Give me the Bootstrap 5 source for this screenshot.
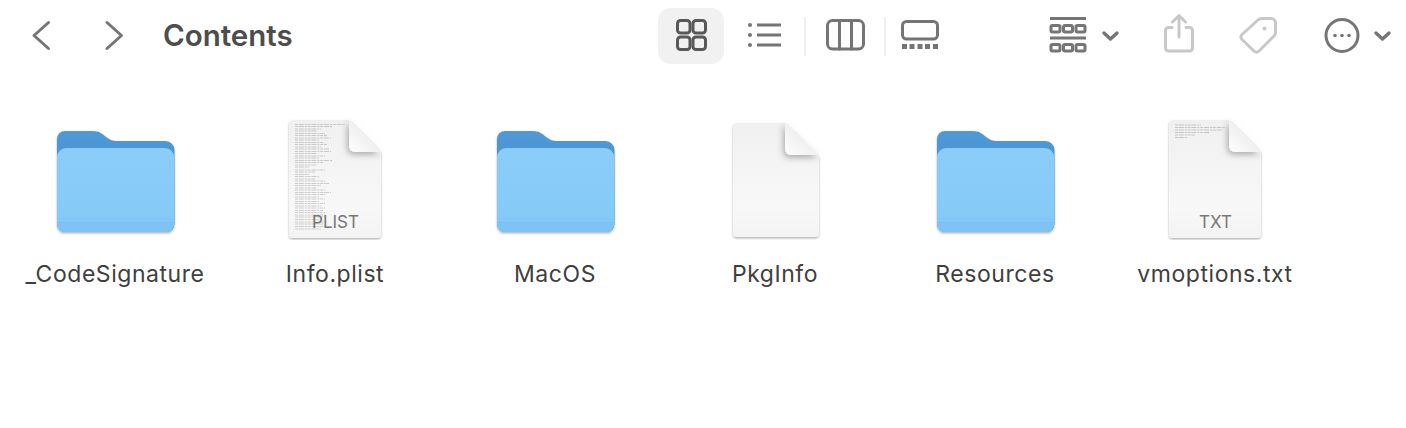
<!doctype html>
<html lang="en">
<head>
<meta charset="utf-8">
<title>Contents</title>
<link href="https://cdn.jsdelivr.net/npm/bootstrap@5.3.0/dist/css/bootstrap.min.css" rel="stylesheet">
<style>
body{background:#fff;font-family:Inter,"Liberation Sans",sans-serif;overflow:hidden}
.tb{height:72px}
.tb-left{width:658px;padding-left:25px}
.tb svg{display:block;flex:none}
.tb-title{margin:0 0 0 33px;font-family:Inter,sans-serif;font-size:29.5px;font-weight:600;color:#4d4d4d;line-height:1;letter-spacing:0}
.tb-gap{width:35px}
.tb-pill{background:#f1f1f1;border-radius:13px;width:66px;height:56px}
.tb-sep{width:2px;height:39px;background:#efefef}
.tb-right{margin-left:90px}
.ms-share{margin-left:30px}
.ms-more{margin-left:35px}
.st{fill:none;stroke:#757575;stroke-width:3;stroke-linecap:round;stroke-linejoin:round}
.st-dark{stroke:#585858}
.st-dim{stroke:#c8c8c8}
.st-heavy{stroke-width:3.4}
.st-butt{stroke-linecap:butt}
.fill-g{fill:#757575}
.browser{padding-top:38px;padding-left:5px}
.entry{width:220px}
.entry-icon{height:130px}
.entry-icon svg{display:block}
.entry-name{margin-top:20px;font-size:23px;line-height:28px;color:#3f3f3f;text-align:center;letter-spacing:.55px}
.kind{top:100px;left:1px;right:0;text-align:center;font-size:17px;line-height:24px;color:#777}
</style>
</head>
<body>
<svg class="d-block" width="0" height="0" aria-hidden="true">
<defs>
<linearGradient id="gBack" x1="0" y1="0" x2="0" y2="1"><stop offset="0" stop-color="#5099d6"/><stop offset="1" stop-color="#3f88c9"/></linearGradient>
<linearGradient id="gFront" x1="0" y1="0" x2="0" y2="1"><stop offset="0" stop-color="#8bcdf9"/><stop offset="1" stop-color="#84c9f7"/></linearGradient>
<linearGradient id="gPage" x1="0" y1="0" x2="0" y2="1"><stop offset="0" stop-color="#f0f0f0"/><stop offset=".75" stop-color="#f8f8f8"/><stop offset="1" stop-color="#f3f3f3"/></linearGradient>
<linearGradient id="gFold" x1="0" y1="1" x2="1" y2="0"><stop offset="0" stop-color="#fefefe"/><stop offset="1" stop-color="#e2e2e2"/></linearGradient>
<filter id="fShadow" x="-10%" y="-10%" width="120%" height="120%"><feDropShadow dx="0" dy="1.400" stdDeviation=".9" flood-color="#000" flood-opacity=".3"/></filter>
<filter id="fFold" x="-50%" y="-50%" width="200%" height="200%"><feDropShadow dx="-1.500" dy="2.500" stdDeviation="3" flood-color="#000" flood-opacity=".3"/></filter>
<symbol id="folder" viewBox="0 0 220 130">
  <g filter="url(#fShadow)">
    <path d="M52 29a8 8 0 0 1 8-8h27c5 0 8 1 11 3.500l4.500 3.500c3 2 5 3 9 3h49a9 9 0 0 1 9 9v74a8 8 0 0 1-8 8H60a8 8 0 0 1-8-8z" fill="url(#gBack)"/>
    <path d="M52 47a9 9 0 0 1 9-9h99a9 9 0 0 1 9 9v67a8 8 0 0 1-8 8H60a8 8 0 0 1-8-8z" fill="url(#gFront)"/>
    <path d="M52 112h117v2a8 8 0 0 1-8 8H60a8 8 0 0 1-8-8z" fill="#7fc3f4"/>
    <path d="M52 109h117M52 112h117" stroke="#80c3f3" stroke-width="1" fill="none"/>
  </g>
</symbol>
<symbol id="page" viewBox="0 0 220 130">
  <path d="M68 10h56l32 32v82a4 4 0 0 1-4 4H68a4 4 0 0 1-4-4V14a4 4 0 0 1 4-4z" fill="url(#gPage)" filter="url(#fShadow)"/>
  <path d="M124 10l32 32h-26a6 6 0 0 1-6-6z" fill="url(#gFold)" filter="url(#fFold)"/>
</symbol>
<symbol id="pageSmall" viewBox="0 0 220 130">
  <path d="M72 13h48l34 34v76a4 4 0 0 1-4 4H72a4 4 0 0 1-4-4V17a4 4 0 0 1 4-4z" fill="url(#gPage)" filter="url(#fShadow)"/>
  <path d="M120 13l34 32h-28a6 6 0 0 1-6-6z" fill="url(#gFold)" filter="url(#fFold)"/>
</symbol>
</defs>
</svg>

<header class="tb d-flex align-items-center">
  <div class="tb-left d-flex align-items-center">
    <svg width="35" height="72" viewBox="25 0 35 72" aria-label="Back"><path class="st" d="M48.500 22.500L34 35.500l14.500 13"/></svg>
    <div class="tb-gap"></div>
    <svg width="35" height="72" viewBox="95 0 35 72" aria-label="Forward"><path class="st" d="M107 22.500L121.500 35.500 107 48.500"/></svg>
    <h1 class="tb-title">Contents</h1>
  </div>
  <div class="d-flex align-items-center">
    <div class="tb-pill d-flex align-items-center justify-content-center">
      <svg width="66" height="56" viewBox="658 8 66 56" aria-label="Icons">
        <g class="st st-dark"><rect x="677.500" y="20.500" width="12.500" height="12.500" rx="3"/><rect x="693" y="20.500" width="12.500" height="12.500" rx="3"/><rect x="677.500" y="37" width="12.500" height="12.500" rx="3"/><rect x="693" y="37" width="12.500" height="12.500" rx="3"/></g>
      </svg>
    </div>
    <svg width="80" height="72" viewBox="724 0 80 72" aria-label="List">
      <circle class="fill-g" cx="750" cy="25" r="2"/><circle class="fill-g" cx="750" cy="35" r="2"/><circle class="fill-g" cx="750" cy="45" r="2"/>
      <path class="st st-butt" d="M757 25h24M757 35h24M757 45h24"/>
    </svg>
    <div class="tb-sep"></div>
    <svg width="78" height="72" viewBox="806 0 78 72" aria-label="Columns">
      <rect class="st" x="827.500" y="20.500" width="36" height="28.500" rx="5"/><path class="st" d="M839.500 20.500v28.500M851.500 20.500v28.500"/>
    </svg>
    <div class="tb-sep"></div>
    <svg width="64" height="72" viewBox="886 0 64 72" aria-label="Gallery">
      <rect class="st" x="902.500" y="21.500" width="35" height="17.500" rx="4"/>
      <path class="fill-g" d="M902 44h5v5h-5zM909.500 44h5v5h-5zM917.500 44h5v5h-5zM925 44h5v5h-5zM933 44h5v5h-5z"/>
    </svg>
  </div>
  <div class="tb-right d-flex align-items-center">
    <svg width="85" height="72" viewBox="1040 0 85 72" aria-label="Group">
      <path class="st st-butt" d="M1050 18.500h36M1050 38h36"/>
      <g class="st"><rect x="1051" y="25.500" width="9" height="6.500" rx="1.500"/><rect x="1063.500" y="25.500" width="9" height="6.500" rx="1.500"/><rect x="1076" y="25.500" width="9" height="6.500" rx="1.500"/><rect x="1051" y="44.500" width="9" height="6.500" rx="1.500"/><rect x="1063.500" y="44.500" width="9" height="6.500" rx="1.500"/><rect x="1076" y="44.500" width="9" height="6.500" rx="1.500"/></g>
      <path class="st st-heavy" d="M1104 33l6.500 6 6.500-6"/>
    </svg>
    <svg class="ms-share" width="45" height="72" viewBox="1155 0 45 72" aria-label="Share">
      <path class="st st-dim" d="M1172 27.500h-3.500a3 3 0 0 0-3 3v17.500a3 3 0 0 0 3 3h21a3 3 0 0 0 3-3V30.500a3 3 0 0 0-3-3H1186M1179 37V16M1172.500 22l6.500-6.500 6.500 6.500"/>
    </svg>
    <svg class="ms-share" width="55" height="72" viewBox="1230 0 55 72" aria-label="Tags">
      <path class="st st-dim" d="M1262 18.500h9a4.500 4.500 0 0 1 4.500 4.500v9.500c0 1.500-.5 2.500-1.500 3.500l-15 15c-1.500 1.500-3.500 1.500-5 0l-12-11.500c-1.500-1.500-1.500-3.500 0-5l16-14.500c1-1 2.500-1.500 4-1.500z"/>
      <circle cx="1264.500" cy="28.500" r="2" fill="#c8c8c8"/>
    </svg>
    <svg class="ms-more" width="80" height="72" viewBox="1320 0 80 72" aria-label="More">
      <circle class="st" cx="1342" cy="35.500" r="16"/>
      <circle class="fill-g" cx="1335" cy="35.500" r="1.800"/><circle class="fill-g" cx="1342" cy="35.500" r="1.800"/><circle class="fill-g" cx="1349" cy="35.500" r="1.800"/>
      <path class="st st-heavy" d="M1376 33l6.500 6 6.500-6"/>
    </svg>
  </div>
</header>

<main class="browser d-flex">
  <div class="entry">
    <div class="entry-icon"><svg width="220" height="130"><use href="#folder"/></svg></div>
    <div class="entry-name">_CodeSignature</div>
  </div>
  <div class="entry">
    <div class="entry-icon position-relative">
      <svg width="220" height="130" viewBox="0 0 220 130">
        <use href="#page"/>
        <path d="M70 14.500h50M70 16.500h38M70 19h26M70 21h22M70 23.500h30M70 25.500h32M70 28h36M70 30h24M70 32.500h28M70 34.500h32M70 37h26M70 39h34M70 41.500h36M70 43.500h22M70 46h30M70 48h24M70 50.500h38M70 52.500h28M70 55h22M70 57h14M70 60h30M70 62h20M70 64.500h14M70 66.500h24M70 69h20M70 71h30M70 73.500h34M70 75.500h26M70 78h22M70 80h30M70 82.500h36M70 84.500h30M70 87h24M70 89h30M70 91.500h24M70 93.500h30M70 96h26M70 98h30M70 100.500h28M70 102.500h30M70 105h30M70 107h30M70 109.500h26M70 112h30M70 114h28M70 116.500h30M70 119h26" stroke="#8d8d8d" stroke-width="1" stroke-dasharray="3 .8 5 1 2 .8" opacity=".4" fill="none"/>
      </svg>
      <span class="kind position-absolute">PLIST</span>
    </div>
    <div class="entry-name">Info.plist</div>
  </div>
  <div class="entry">
    <div class="entry-icon"><svg width="220" height="130"><use href="#folder"/></svg></div>
    <div class="entry-name">MacOS</div>
  </div>
  <div class="entry">
    <div class="entry-icon"><svg width="220" height="130"><use href="#pageSmall"/></svg></div>
    <div class="entry-name">PkgInfo</div>
  </div>
  <div class="entry">
    <div class="entry-icon"><svg width="220" height="130"><use href="#folder"/></svg></div>
    <div class="entry-name">Resources</div>
  </div>
  <div class="entry">
    <div class="entry-icon position-relative">
      <svg width="220" height="130" viewBox="0 0 220 130">
        <use href="#page"/>
        <path d="M70 15h26M70 17.500h50M70 20h48M70 22.500h34M70 25h20M70 27.500h12" stroke="#8d8d8d" stroke-width="1" stroke-dasharray="3 .8 5 1 2 .8" opacity=".45" fill="none"/>
      </svg>
      <span class="kind position-absolute">TXT</span>
    </div>
    <div class="entry-name">vmoptions.txt</div>
  </div>
</main>
<script src="https://cdn.jsdelivr.net/npm/bootstrap@5.3.0/dist/js/bootstrap.bundle.min.js"></script>
</body>
</html>
